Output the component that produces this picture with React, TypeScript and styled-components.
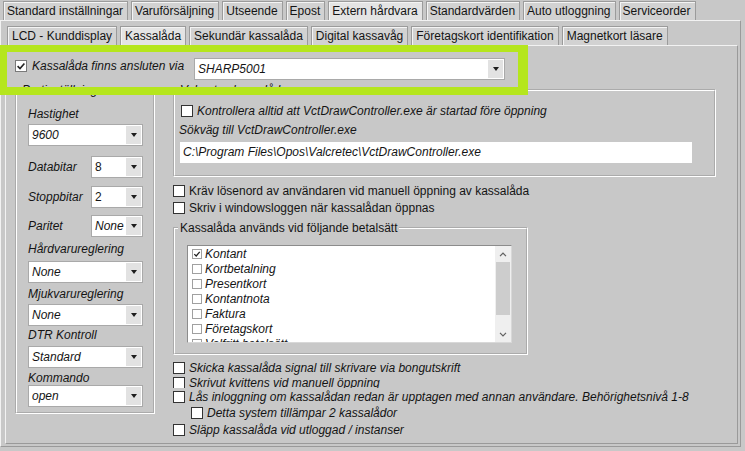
import React from 'react';
import styled, {createGlobalStyle} from 'styled-components';

const GlobalStyle = createGlobalStyle`
  html, body {
    margin: 0;
    padding: 0;
    background: #c8c8c8;
  }
  body {
    font-family: "Liberation Sans", Arial, sans-serif;
    font-size: 12px;
    color: #141414;
  }
`;

const TOP_TABS = [
  'Standard inställningar',
  'Varuförsäljning',
  'Utseende',
  'Epost',
  'Extern hårdvara',
  'Standardvärden',
  'Auto utloggning',
  'Serviceorder'
];

const SUB_TABS = [
  'LCD - Kunddisplay',
  'Kassalåda',
  'Sekundär kassalåda',
  'Digital kassavåg',
  'Företagskort identifikation',
  'Magnetkort läsare'
];

const PAYMENTS = [
  {name: 'Kontant', checked: true},
  {name: 'Kortbetalning'},
  {name: 'Presentkort'},
  {name: 'Kontantnota'},
  {name: 'Faktura'},
  {name: 'Företagskort'},
  {name: 'Valfritt betalsätt'}
];

const Window = styled.div`
  position: relative;
  width: 745px;
  height: 451px;
  overflow: hidden;
  background: #c8c8c8;
`;

const TabStrip = styled.div<{$indent: number}>`
  display: flex;
  align-items: flex-end;
  gap: 3px;
  height: 20px;
  padding-left: ${p => p.$indent}px;
  box-sizing: border-box;
`;

const Tab = styled.div<{$active?: boolean; $pad: string}>`
  height: 19px;
  box-sizing: border-box;
  padding: ${p => p.$pad};
  display: flex;
  align-items: center;
  white-space: nowrap;
  background: ${p => (p.$active ? '#e4e4e4' : '#d2d2d2')};
  border: 1px solid #9b9b9b;
  border-bottom: none;
  box-shadow: inset 1px 1px 0 #f4f4f4;
`;

const Pane = styled.div<{$width: number; $height: number}>`
  width: ${p => p.$width}px;
  height: ${p => p.$height}px;
  box-sizing: border-box;
  border: 1px solid;
  border-color: #f2f2f2 #9a9a9a #9a9a9a #f2f2f2;
`;

const OuterPane = styled(Pane)`
  padding: 4px 0 0 4px;
`;

const InnerPane = styled(Pane)`
  display: flex;
  flex-direction: column;
`;

const Highlight = styled.div`
  position: absolute;
  left: 0;
  top: 45px;
  width: 528px;
  height: 50px;
  box-sizing: border-box;
  border: solid #b5e61d;
  border-width: 7px 10px 8px 7px;
  pointer-events: none;
`;

const TopRow = styled.div`
  display: grid;
  grid-template-columns: 179px 310px;
  align-items: start;
  height: 22px;
  margin-top: 12px;
  padding-left: 9px;
`;

const Body = styled.div`
  display: flex;
  align-items: flex-start;
  gap: 18px;
  margin-top: 3px;
  padding-left: 9px;
`;

const Column = styled.div`
  display: flex;
  flex-direction: column;
`;

const Group = styled.fieldset<{$width: number; $pad: string; $mt?: number}>`
  margin: ${p => p.$mt ?? 0}px 0 0 0;
  min-width: 0;
  width: ${p => p.$width}px;
  box-sizing: border-box;
  padding: ${p => p.$pad};
  border: 2px groove #ffffff;
  display: flex;
  flex-direction: column;
  align-items: flex-start;
`;

const Legend = styled.legend<{$shift: number; $italic?: boolean}>`
  margin-left: ${p => p.$shift}px;
  padding: 0 2px;
  line-height: 14px;
  font-style: ${p => (p.$italic ? 'italic' : 'normal')};
  white-space: nowrap;
`;

const Text = styled.span<{$italic?: boolean; $mt?: number; $ml?: number}>`
  display: block;
  line-height: 14px;
  height: 14px;
  white-space: nowrap;
  font-style: ${p => (p.$italic ? 'italic' : 'normal')};
  margin-top: ${p => p.$mt ?? 0}px;
  margin-left: ${p => p.$ml ?? 0}px;
`;

const CheckRow = styled.div<{$h?: number; $mt?: number; $indent?: number; $gap?: number}>`
  display: flex;
  align-items: ${p => (p.$h && p.$h < 14 ? 'flex-start' : 'center')};
  gap: ${p => p.$gap ?? 4}px;
  height: ${p => p.$h ?? 14}px;
  margin-top: ${p => p.$mt ?? 0}px;
  padding-left: ${p => p.$indent ?? 0}px;
  overflow: hidden;
  flex: none;
`;

const Box = styled.span<{$size?: number; $tone?: string; $top?: number}>`
  flex: none;
  width: ${p => p.$size ?? 12}px;
  height: ${p => p.$size ?? 12}px;
  margin-top: ${p => p.$top ?? 0}px;
  box-sizing: border-box;
  border: 1px solid ${p => p.$tone ?? '#333'};
  background: #fff;
  display: flex;
  align-items: center;
  justify-content: center;
`;

const Check = ({size = 12, tone = '#333', checked = false, top = 0}: {
  size?: number;
  tone?: string;
  checked?: boolean;
  top?: number;
}) => (
  <Box $size={size} $tone={tone} $top={top}>
    {checked && (
      <svg width={size - 2} height={size - 2} viewBox="0 0 10 10">
        <path d="M1.6 5.2 L4 7.5 L8.4 2.4" fill="none" stroke="#222" strokeWidth="1.6" />
      </svg>
    )}
  </Box>
);

const ComboBox = styled.div<{$width: number; $mt?: number}>`
  display: flex;
  flex: none;
  width: ${p => p.$width}px;
  height: 22px;
  margin-top: ${p => p.$mt ?? 0}px;
  box-sizing: border-box;
  border: 1px solid #a9a9a9;
  background: #fff;
`;

const ComboText = styled.span<{$italic?: boolean}>`
  flex: 1;
  padding-left: 3px;
  line-height: 20px;
  white-space: nowrap;
  overflow: hidden;
  font-style: ${p => (p.$italic ? 'italic' : 'normal')};
`;

const ComboButton = styled.span`
  width: 15px;
  margin: 1px;
  background: #e2e2e2;
  display: flex;
  align-items: center;
  justify-content: center;
  &::after {
    content: '';
    border-left: 3.5px solid transparent;
    border-right: 3.5px solid transparent;
    border-top: 4px solid #1e1e1e;
  }
`;

const Combo = ({value, width, italic = true, mt}: {
  value: string;
  width: number;
  italic?: boolean;
  mt?: number;
}) => (
  <ComboBox $width={width} $mt={mt}>
    <ComboText $italic={italic}>{value}</ComboText>
    <ComboButton />
  </ComboBox>
);

const FieldRow = styled.div<{$mt: number}>`
  display: flex;
  align-items: center;
  justify-content: space-between;
  width: 115px;
  height: 22px;
  margin-top: ${p => p.$mt}px;
`;

const PathInput = styled.div`
  width: 512px;
  height: 21px;
  margin-top: 5px;
  margin-left: 1px;
  box-sizing: border-box;
  padding-left: 3px;
  line-height: 21px;
  background: #fff;
  font-style: italic;
  white-space: nowrap;
`;

const ListBox = styled.div`
  display: flex;
  width: 325px;
  height: 98px;
  box-sizing: border-box;
  border: 1px solid #8c8c8c;
  border-right-color: #d8d8d8;
  border-bottom-color: #d8d8d8;
  background: #fff;
  overflow: hidden;
`;

const ListItems = styled.div`
  flex: 1;
  padding-left: 4px;
`;

const ListItem = styled.div`
  display: flex;
  align-items: center;
  gap: 3px;
  height: 15px;
  font-style: italic;
  white-space: nowrap;
`;

const ScrollBar = styled.div`
  width: 16px;
  display: flex;
  flex-direction: column;
  background: #efefef;
`;

const ScrollButton = styled.div`
  height: 16px;
  display: flex;
  align-items: center;
  justify-content: center;
`;

const ScrollTrack = styled.div`
  flex: 1;
  display: flex;
  flex-direction: column;
  padding: 0 1px;
`;

const ScrollThumb = styled.div`
  height: 53px;
  background: #cdcdcd;
`;

const Chevron = ({up}: {up?: boolean}) => (
  <svg width="8" height="5" viewBox="0 0 8 5">
    <path
      d={up ? 'M1 4.2 L4 1.2 L7 4.2' : 'M1 0.8 L4 3.8 L7 0.8'}
      fill="none"
      stroke="#606060"
      strokeWidth="1.2"
    />
  </svg>
);

const App = () => {
  return (
    <>
      <GlobalStyle />
      <Window>
        <TabStrip $indent={3}>
          {TOP_TABS.map(t => (
            <Tab key={t} $pad="0 4px 0 3px" $active={t === 'Extern hårdvara'}>
              {t}
            </Tab>
          ))}
        </TabStrip>
        <OuterPane $width={741} $height={427}>
          <TabStrip $indent={2}>
            {SUB_TABS.map(t => (
              <Tab key={t} $pad="0 4px" $active={t === 'Kassalåda'}>
                {t}
              </Tab>
            ))}
          </TabStrip>
          <InnerPane $width={733} $height={399}>
            <TopRow>
              <CheckRow $mt={1} $gap={5}>
                <Check tone="#7a7a7a" checked />
                <Text $italic>Kassalåda finns ansluten via</Text>
              </CheckRow>
              <Combo value="SHARP5001" width={311} />
            </TopRow>

            <Body>
              <Group $width={140} $pad="0 10px 5px 11px">
                <Legend $shift={-8} $italic>
                  Portinställningar
                </Legend>
                <Text $italic $mt={10}>Hastighet</Text>
                <Combo value="9600" width={115} mt={3} />
                <FieldRow $mt={10}>
                  <Text $italic>Databitar</Text>
                  <Combo value="8" width={52} italic={false} />
                </FieldRow>
                <FieldRow $mt={8}>
                  <Text $italic>Stoppbitar</Text>
                  <Combo value="2" width={52} italic={false} />
                </FieldRow>
                <FieldRow $mt={7}>
                  <Text $italic>Paritet</Text>
                  <Combo value="None" width={52} />
                </FieldRow>
                <Text $italic $mt={5}>Hårdvarureglering</Text>
                <Combo value="None" width={115} mt={5} />
                <Text $italic $mt={4}>Mjukvarureglering</Text>
                <Combo value="None" width={115} mt={3} />
                <Text $italic $mt={2}>DTR Kontroll</Text>
                <Combo value="Standard" width={115} mt={4} />
                <Text $italic $mt={3}>Kommando</Text>
                <Combo value="open" width={115} mt={0} />
              </Group>

              <Column>
                <Group $width={543} $pad="0 0 12px 4px">
                  <Legend $shift={-1} $italic>
                    Valcretec kassalåda
                  </Legend>
                  <CheckRow $mt={7} $indent={2}>
                    <Check />
                    <Text $italic>
                      Kontrollera alltid att VctDrawController.exe är startad före öppning
                    </Text>
                  </CheckRow>
                  <Text $italic $mt={5}>Sökväg till VctDrawController.exe</Text>
                  <PathInput>C:\Program Files\Opos\Valcretec\VctDrawController.exe</PathInput>
                </Group>

                <CheckRow $mt={7}>
                  <Check />
                  <Text>Kräv lösenord av användaren vid manuell öppning av kassalåda</Text>
                </CheckRow>
                <CheckRow $mt={3}>
                  <Check />
                  <Text>Skriv i windowsloggen när kassalådan öppnas</Text>
                </CheckRow>

                <Group $width={355} $pad="10px 0 10px 12px" $mt={6}>
                  <Legend $shift={-9}>Kassalåda används vid följande betalsätt</Legend>
                  <ListBox>
                    <ListItems>
                      {PAYMENTS.map(p => (
                        <ListItem key={p.name}>
                          <Check size={10} tone="#a0a0a0" checked={p.checked} />
                          {p.name}
                        </ListItem>
                      ))}
                    </ListItems>
                    <ScrollBar>
                      <ScrollButton>
                        <Chevron up />
                      </ScrollButton>
                      <ScrollTrack>
                        <ScrollThumb />
                      </ScrollTrack>
                      <ScrollButton>
                        <Chevron />
                      </ScrollButton>
                    </ScrollBar>
                  </ListBox>
                </Group>

                <CheckRow $mt={6}>
                  <Check />
                  <Text $italic>Skicka kassalåda signal till skrivare via bongutskrift</Text>
                </CheckRow>
                <CheckRow $mt={1} $h={12}>
                  <Check top={1} />
                  <Text $italic>Skrivut kvittens vid manuell öppning</Text>
                </CheckRow>
                <CheckRow $mt={2}>
                  <Check />
                  <Text $italic>
                    Lås inloggning om kassalådan redan är upptagen med annan användare. Behörighetsnivå 1-8
                  </Text>
                </CheckRow>
                <CheckRow $mt={2} $indent={18}>
                  <Check />
                  <Text $italic>Detta system tillämpar 2 kassalådor</Text>
                </CheckRow>
                <CheckRow $mt={3}>
                  <Check />
                  <Text $italic>Släpp kassalåda vid utloggad / instanser</Text>
                </CheckRow>
              </Column>
            </Body>
          </InnerPane>
        </OuterPane>
        <Highlight />
      </Window>
    </>
  );
};

export default App;
